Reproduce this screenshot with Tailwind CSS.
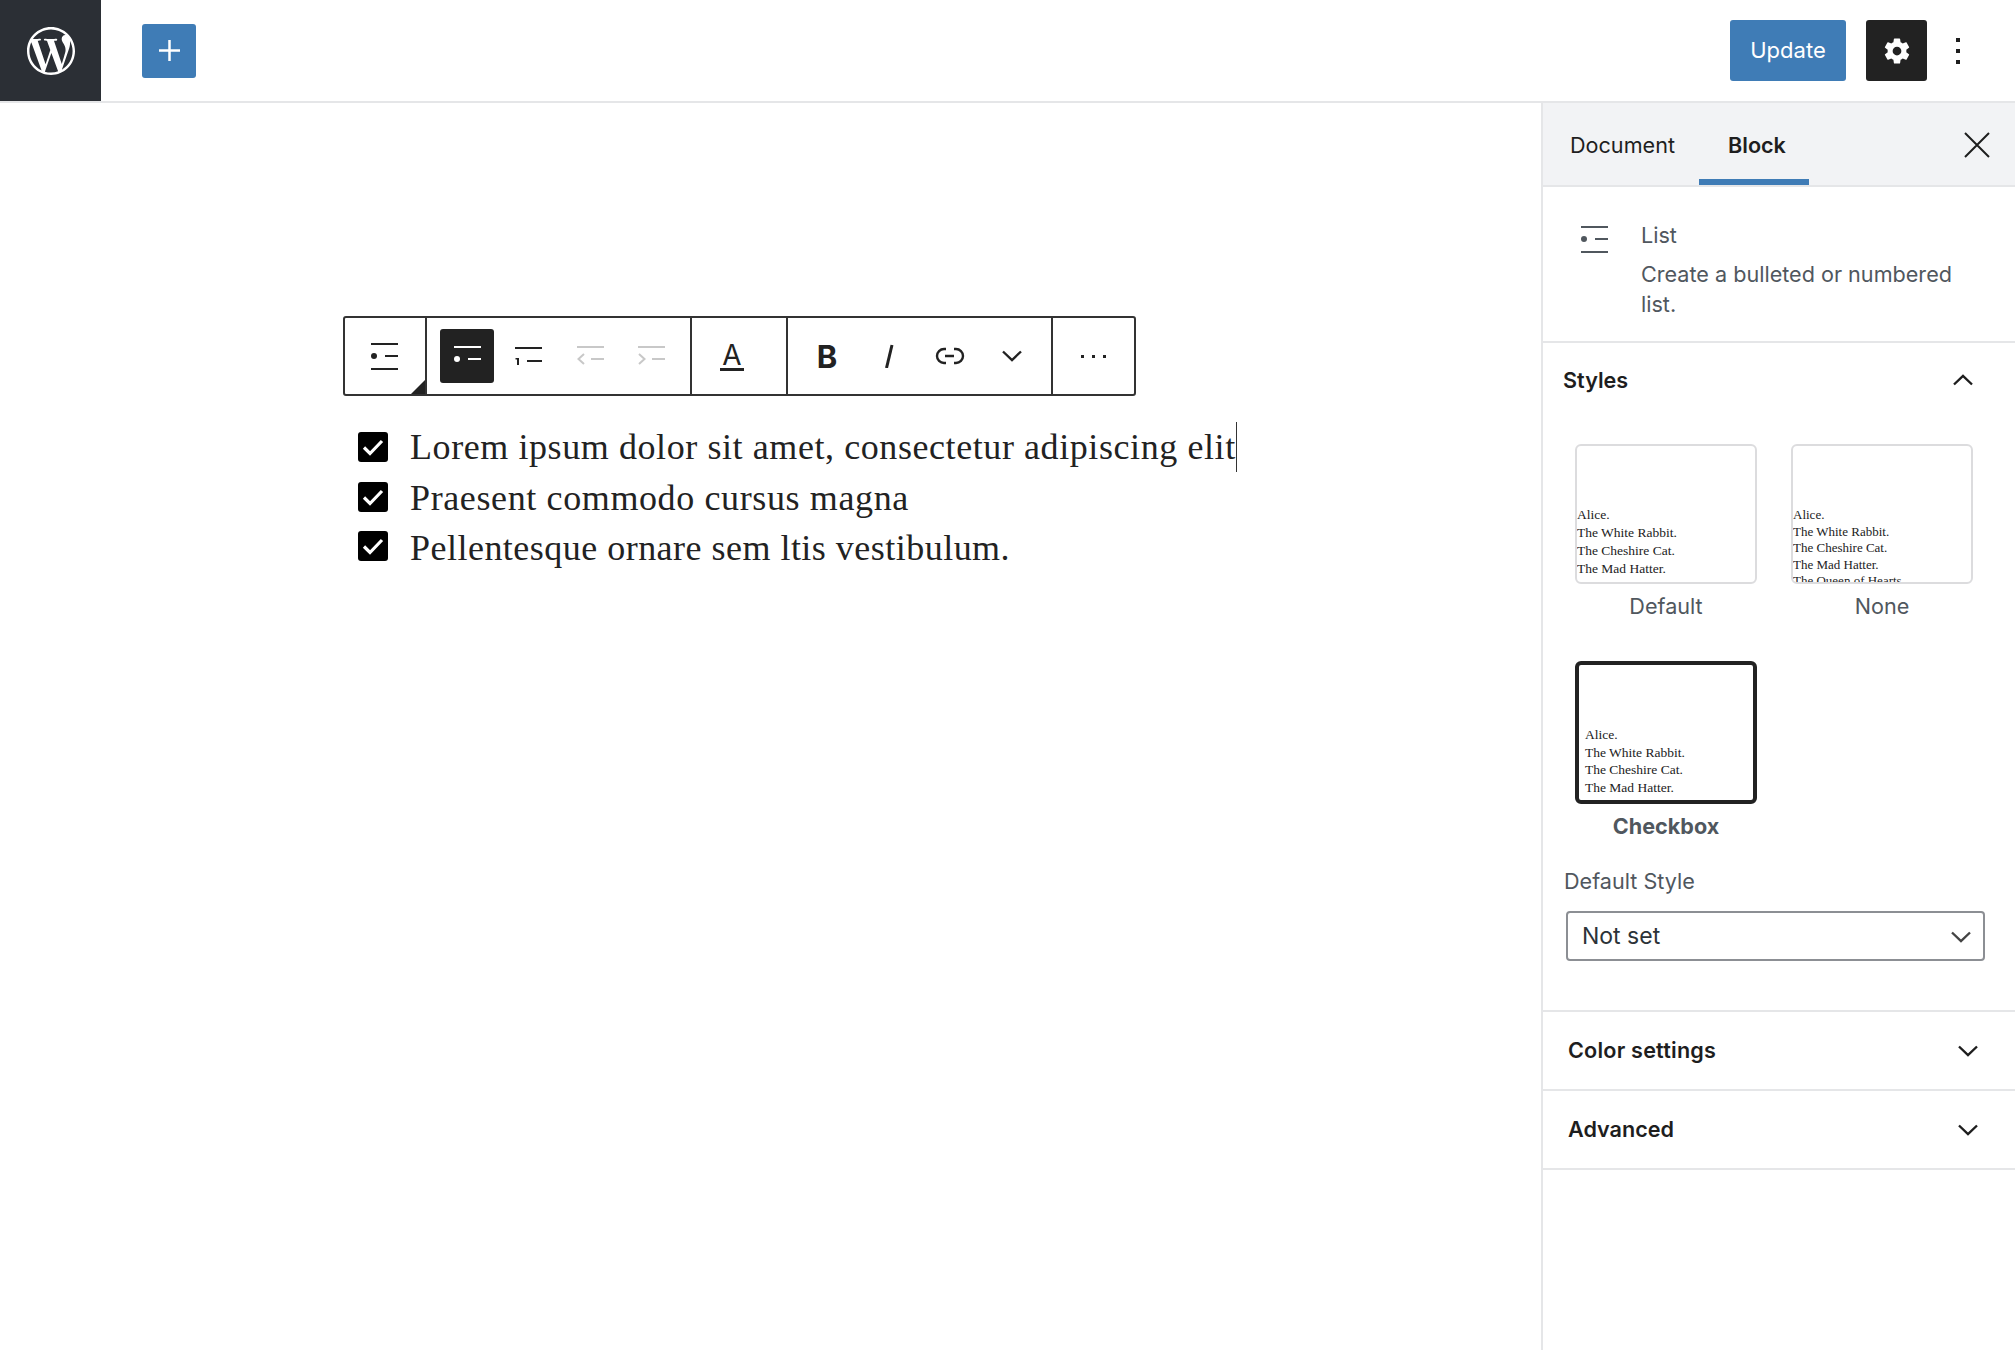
<!DOCTYPE html>
<html lang="en">
<head>
    <meta charset="UTF-8">
    <meta name="viewport" content="width=device-width, initial-scale=1.0">
    <script src="https://cdn.jsdelivr.net/npm/@tailwindcss/browser@4"></script>
    <title>Edit Post</title>
</head>
<body class="bg-white h-[1350px] overflow-hidden font-['Inter',sans-serif] text-[#1e1e1e]">
    <!--top bar-->
    <header class="h-[103px] flex items-center border-b-2 border-[#e5e6e8]">
        <div class="w-[101px] h-[101px] bg-[#2b2f35] flex items-center justify-center shrink-0">
            <svg width="48" height="48" viewBox="0 0 24 24" fill="#fff"><path d="M21.469 6.825c.84 1.537 1.318 3.3 1.318 5.175 0 3.979-2.156 7.456-5.363 9.325l3.295-9.527c.615-1.54.82-2.771.82-3.864 0-.405-.026-.78-.07-1.11m-7.981.105c.647-.03 1.232-.105 1.232-.105.582-.075.514-.93-.067-.899 0 0-1.755.135-2.88.135-1.064 0-2.85-.15-2.85-.15-.585-.03-.661.855-.075.885 0 0 .54.061 1.125.09l1.68 4.605-2.37 7.08L5.354 6.9c.649-.03 1.234-.1 1.234-.1.585-.075.516-.93-.065-.896 0 0-1.746.138-2.874.138-.2 0-.438-.008-.69-.015C4.911 3.15 8.235 1.215 12 1.215c2.809 0 5.365 1.072 7.286 2.833-.046-.003-.091-.009-.141-.009-1.06 0-1.812.923-1.812 1.914 0 .89.513 1.643 1.06 2.531.411.72.89 1.643.89 2.977 0 .915-.354 1.994-.821 3.479l-1.075 3.585-3.9-11.61.001.014zM12 22.784c-1.059 0-2.081-.153-3.048-.437l3.237-9.406 3.315 9.087c.024.053.05.101.078.149-1.12.393-2.325.609-3.582.609M1.211 12c0-1.564.336-3.05.935-4.39L7.29 21.709C3.694 19.96 1.212 16.271 1.211 12M12 0C5.385 0 0 5.385 0 12s5.385 12 12 12 12-5.385 12-12S18.615 0 12 0"/></svg>
        </div>
        <button class="ml-[41px] w-[54px] h-[54px] bg-[#3f7cb6] rounded-[3px] flex items-center justify-center">
            <svg width="21" height="21" viewBox="0 0 21 21" fill="#fff"><rect x="9.250" width="2.500" height="21"/><rect y="9.250" width="21" height="2.500"/></svg>
        </button>
        <div class="ml-auto flex items-center">
            <button class="w-[116px] h-[61px] bg-[#3f7cb6] rounded-[3px] text-white text-[22px]">Update</button>
            <button class="ml-[20px] w-[61px] h-[61px] bg-[#222222] rounded-[3px] flex items-center justify-center">
                <svg width="30" height="30" viewBox="0 0 24 24" fill="#fff" fill-rule="evenodd"><path d="M19.43 12.98c.04-.32.07-.64.07-.98s-.03-.66-.07-.98l2.11-1.65c.19-.15.24-.42.12-.64l-2-3.46c-.12-.22-.39-.3-.61-.22l-2.49 1c-.52-.4-1.08-.73-1.69-.98l-.38-2.65A.49.49 0 0 0 14 2h-4c-.25 0-.46.18-.49.42l-.38 2.65c-.61.25-1.17.59-1.69.98l-2.49-1a.5.5 0 0 0-.61.22l-2 3.46c-.13.22-.07.49.12.64l2.11 1.65c-.04.32-.07.65-.07.98s.03.66.07.98l-2.11 1.65c-.19.15-.24.42-.12.64l2 3.46c.12.22.39.3.61.22l2.49-1c.52.4 1.08.73 1.69.98l.38 2.65c.03.24.24.42.49.42h4c.25 0 .46-.18.49-.42l.38-2.65c.61-.25 1.17-.59 1.69-.98l2.49 1c.23.09.49 0 .61-.22l2-3.46c.12-.22.07-.49-.12-.64l-2.11-1.65zM12 15.500a3.500 3.500 0 1 1 0-7 3.500 3.500 0 0 1 0 7z"/></svg>
            </button>
            <div class="ml-[29px] mr-[55px] w-[4px] flex flex-col gap-[7px]">
                <span class="block w-[4px] h-[4px] bg-[#1e1e1e]"></span>
                <span class="block w-[4px] h-[4px] bg-[#1e1e1e]"></span>
                <span class="block w-[4px] h-[4px] bg-[#1e1e1e]"></span>
            </div>
        </div>
    </header>

    <div class="flex h-[1247px]">
        <!--editor-->
        <main class="flex-1 pt-[213px] pl-[343px]">
            <div class="w-[793px] h-[80px] border-2 border-[#333333] rounded-[3px] flex">
                <div class="relative w-[82px] shrink-0 border-r-2 border-[#333333] flex items-center justify-center">
                    <svg class="-ml-[2px]" width="27" height="27" viewBox="0 0 27 27" fill="#222"><rect width="27" height="2"/><circle cx="3" cy="13" r="3"/><rect x="14" y="12" width="13" height="2"/><rect y="25" width="27" height="2"/></svg>
                    <span class="absolute right-0 bottom-0 w-0 h-0 border-l-[14px] border-l-transparent border-b-[14px] border-b-[#222222]"></span>
                </div>
                <div class="w-[265px] shrink-0 border-r-2 border-[#333333] pl-[13px] flex items-center gap-[7.5px]">
                    <button class="w-[54px] h-[54px] bg-[#222222] rounded-[3px] flex items-center justify-center">
                        <svg width="27" height="20" viewBox="0 0 27 20" fill="#fff"><rect width="27" height="2"/><circle cx="3" cy="13" r="3"/><rect x="14" y="12" width="13" height="2"/></svg>
                    </button>
                    <button class="w-[54px] h-[54px] flex items-center justify-center">
                        <svg width="27" height="18" viewBox="0 0 27 18" fill="#222"><rect width="27" height="2"/><rect x="2" y="11" width="2" height="7"/><rect x="0.500" y="11" width="2" height="1.500"/><rect x="12" y="13" width="15" height="2"/></svg>
                    </button>
                    <button class="w-[54px] h-[54px] flex items-center justify-center">
                        <svg width="27" height="20" viewBox="0 0 27 20" fill="none" stroke="#c8c8c8" stroke-width="2"><path d="M0 1h27M14 13h13M7 8l-5.500 5 5.500 5"/></svg>
                    </button>
                    <button class="w-[54px] h-[54px] flex items-center justify-center">
                        <svg width="27" height="20" viewBox="0 0 27 20" fill="none" stroke="#c8c8c8" stroke-width="2"><path d="M0 1h27M14 13h13M1 8l5.500 5-5.500 5"/></svg>
                    </button>
                </div>
                <div class="w-[96px] shrink-0 border-r-2 border-[#333333] pl-[13px] flex items-center">
                    <div class="w-[54px] flex flex-col items-center">
                        <span class="text-[28px] leading-[26px] font-normal text-[#222222]">A</span>
                        <span class="block w-[24px] h-[3px] bg-[#222222]"></span>
                    </div>
                </div>
                <div class="w-[265px] shrink-0 border-r-2 border-[#333333] pl-[12px] flex items-center gap-[7.5px]">
                    <button class="w-[54px] h-[54px] text-[31px] leading-none font-bold text-[#222222]">B</button>
                    <button class="w-[54px] h-[54px] flex items-center justify-center">
                        <svg width="10" height="24" viewBox="0 0 10 24" fill="none" stroke="#222" stroke-width="3"><path d="M8 1 2.500 24"/></svg>
                    </button>
                    <button class="w-[54px] h-[54px] flex items-center justify-center">
                        <svg width="30" height="18" viewBox="0 0 30 18" fill="none" stroke="#222" stroke-width="2.400"><path d="M11 2H9a7 7 0 0 0 0 14h2M19 2h2a7 7 0 0 1 0 14h-2M10 9h9"/></svg>
                    </button>
                    <button class="w-[54px] h-[54px] flex items-center justify-center">
                        <svg width="20" height="12" viewBox="0 0 20 12" fill="none" stroke="#222" stroke-width="2.400"><path d="m1 1.500 9 8.500 9-8.500"/></svg>
                    </button>
                </div>
                <div class="flex-1 flex items-center justify-center gap-[8px]">
                    <span class="block w-[3px] h-[3px] bg-[#222222]"></span>
                    <span class="block w-[3px] h-[3px] bg-[#222222]"></span>
                    <span class="block w-[3px] h-[3px] bg-[#222222]"></span>
                </div>
            </div>

            <ul class="mt-[26px] ml-[15px] font-['Liberation_Serif',serif] text-[36px] leading-[50px] text-[#222222]">
                <li class="flex items-center gap-[22px]">
                    <svg width="30" height="30" viewBox="0 0 30 30" class="shrink-0"><rect width="30" height="30" rx="3" fill="#000"/><path d="m6 15.500 6 6L24 9" fill="none" stroke="#fff" stroke-width="3.200"/></svg>
                    <span class="border-r border-[#333333] tracking-[0.58px]">Lorem ipsum dolor sit amet, consectetur adipiscing elit</span>
                </li>
                <li class="flex items-center gap-[22px]">
                    <svg width="30" height="30" viewBox="0 0 30 30" class="shrink-0"><rect width="30" height="30" rx="3" fill="#000"/><path d="m6 15.500 6 6L24 9" fill="none" stroke="#fff" stroke-width="3.200"/></svg>
                    <span class="translate-y-[1px] tracking-[0.62px]">Praesent commodo cursus magna</span>
                </li>
                <li class="flex items-center gap-[22px] -mt-[1px]">
                    <svg width="30" height="30" viewBox="0 0 30 30" class="shrink-0"><rect width="30" height="30" rx="3" fill="#000"/><path d="m6 15.500 6 6L24 9" fill="none" stroke="#fff" stroke-width="3.200"/></svg>
                    <span class="translate-y-[2px] tracking-[0.48px]">Pellentesque ornare sem ltis vestibulum.</span>
                </li>
            </ul>
        </main>

        <!--sidebar-->
        <aside class="w-[474px] shrink-0 border-l-2 border-[#e5e6e8]">
            <div class="h-[84px] bg-[#f2f3f5] border-b-2 border-[#e5e6e8] flex text-[21.6px]">
                <div class="pl-[27px] w-[156px] pt-[26px] leading-[32px]">Document</div>
                <div class="w-[110px] h-[82px] border-b-[6px] border-[#3f7cb6] pl-[29px] pt-[26px] leading-[32px] font-semibold">Block</div>
                <svg class="ml-auto mr-[25px] mt-[29px]" width="26" height="26" viewBox="0 0 26 26" fill="none" stroke="#1e1e1e" stroke-width="2"><path d="m1 1 24 24M25 1 1 25"/></svg>
            </div>

            <div class="h-[156px] border-b-2 border-[#e5e6e8] flex pl-[38px] pt-[38px] text-[#50575e]">
                <svg class="mt-[1px] shrink-0" width="27" height="27" viewBox="0 0 27 27" fill="#50575e"><rect width="27" height="2"/><circle cx="3" cy="13" r="3"/><rect x="14" y="12" width="13" height="2"/><rect y="25" width="27" height="2"/></svg>
                <div class="ml-[33px] text-[21.6px] leading-[30px] w-[330px]">
                    <p class="-mt-[5px]">List</p>
                    <p class="mt-[9px]">Create a bulleted or numbered list.</p>
                </div>
            </div>

            <section class="h-[669px] border-b-2 border-[#e5e6e8] relative">
                <div class="flex items-center justify-between pl-[20px] pr-[42px] pt-[22px]">
                    <h3 class="text-[21.6px] leading-[30px] font-semibold">Styles</h3>
                    <svg width="20" height="12" viewBox="0 0 20 12" fill="none" stroke="#1e1e1e" stroke-width="2.400"><path d="m1 10.500 9-8.500 9 8.500"/></svg>
                </div>
                <div class="grid grid-cols-[182px_182px] gap-x-[34px] ml-[32px] mt-[49px] font-['Liberation_Serif',serif] text-[#222222] text-[13.5px]">
                    <div>
                        <div class="h-[140px] border-2 border-[#dcdcde] rounded-[6px] overflow-hidden pt-[60px] leading-[18px]">
                            <p>Alice.</p><p>The White Rabbit.</p><p>The Cheshire Cat.</p><p>The Mad Hatter.</p><p>The Queen of Hearts.</p>
                        </div>
                        <p class="font-['Inter',sans-serif] text-[21.6px] leading-[30px] text-center text-[#50575e] mt-[7px]">Default</p>
                    </div>
                    <div>
                        <div class="h-[140px] border-2 border-[#dcdcde] rounded-[6px] overflow-hidden pt-[61px] leading-[16.5px] text-[13px]">
                            <p>Alice.</p><p>The White Rabbit.</p><p>The Cheshire Cat.</p><p>The Mad Hatter.</p><p>The Queen of Hearts.</p>
                        </div>
                        <p class="font-['Inter',sans-serif] text-[21.6px] leading-[30px] text-center text-[#50575e] mt-[7px]">None</p>
                    </div>
                    <div class="mt-[40px]">
                        <div class="h-[143px] border-[4px] border-[#222222] rounded-[6px] overflow-hidden pt-[61px] pl-[6px] leading-[17.6px]">
                            <p>Alice.</p><p>The White Rabbit.</p><p>The Cheshire Cat.</p><p>The Mad Hatter.</p>
                        </div>
                        <p class="font-['Inter',sans-serif] text-[21.6px] leading-[30px] text-center font-bold text-[#50575e] mt-[7px]">Checkbox</p>
                    </div>
                </div>
                <p class="ml-[21px] mt-[25px] text-[21.6px] leading-[30px] text-[#50575e]">Default Style</p>
                <div class="relative ml-[23px] mt-[15px] w-[419px]">
                    <select class="w-full h-[50px] appearance-none border-2 border-[#8c8f94] rounded-[4px] bg-white pl-[14px] text-[23px] text-[#2c3338]">
                        <option>Not set</option>
                    </select>
                    <svg class="absolute right-[14px] top-[20px]" width="20" height="12" viewBox="0 0 20 12" fill="none" stroke="#444" stroke-width="2.400"><path d="m1 1.500 9 8.500 9-8.500"/></svg>
                </div>
            </section>

            <div class="h-[79px] border-b-2 border-[#e5e6e8] flex items-center justify-between pl-[25px] pr-[37px]">
                <h3 class="text-[21.6px] tracking-[0.2px] font-semibold">Color settings</h3>
                <svg width="20" height="12" viewBox="0 0 20 12" fill="none" stroke="#1e1e1e" stroke-width="2.400"><path d="m1 1.500 9 8.500 9-8.500"/></svg>
            </div>
            <div class="h-[79px] border-b-2 border-[#e5e6e8] flex items-center justify-between pl-[25px] pr-[37px]">
                <h3 class="text-[21.6px] font-semibold">Advanced</h3>
                <svg width="20" height="12" viewBox="0 0 20 12" fill="none" stroke="#1e1e1e" stroke-width="2.400"><path d="m1 1.500 9 8.500 9-8.500"/></svg>
            </div>
        </aside>
    </div>
</body>
</html>
